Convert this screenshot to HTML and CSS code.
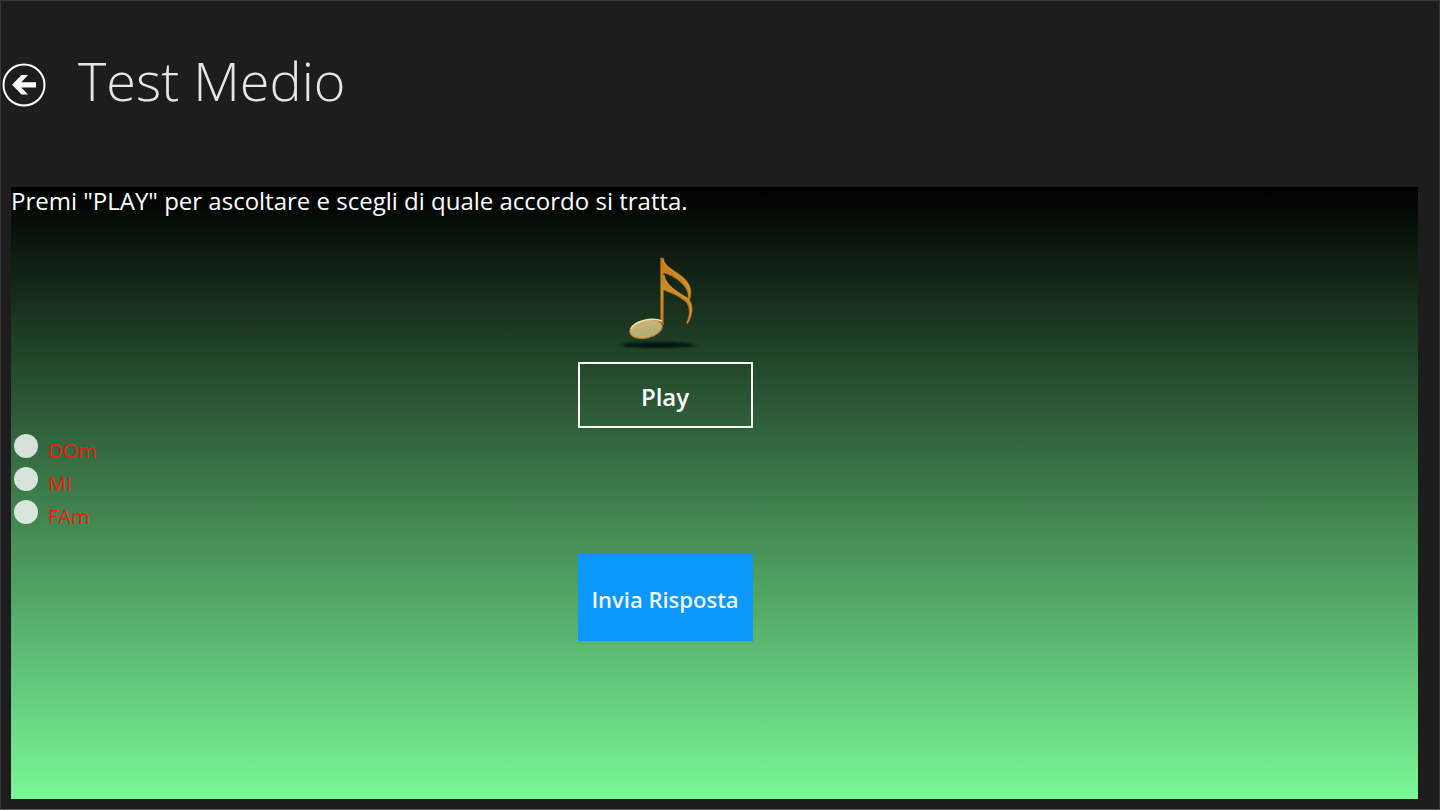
FILE: index.html
```html
<!DOCTYPE html>
<html lang="it">

<head>
    <meta charset="UTF-8">
    <meta name="viewport" content="width=device-width, initial-scale=1">
    <title>Test Medio</title>
    <link rel="stylesheet" href="styles.css">
</head>

<body>
    <header class="header">
        <button class="back" type="button" aria-label="Indietro">
            <svg viewBox="0 0 44 44" width="44" height="44">
                <circle cx="22" cy="22" r="20.5" fill="none" stroke="#fff" stroke-width="2" />
                <path d="M10 21.700 L19.500 12 H26 L19.300 19.200 H34 V24.400 H19.300 L26 31.500 H19.500 Z" fill="#fff" />
            </svg>
        </button>
        <h1 class="title">Test Medio</h1>
    </header>
    <main class="panel">
        <p class="question">Premi "PLAY" per ascoltare e scegli di quale accordo si tratta.</p>
        <div class="player">
            <svg class="note" viewBox="0 0 100 110" width="100" height="110" aria-hidden="true">
                <defs>
                    <linearGradient id="stem" x1="0" y1="0" x2="0" y2="1">
                        <stop offset="0" stop-color="#c8790f" />
                        <stop offset="0.5" stop-color="#c98f2c" />
                        <stop offset="1" stop-color="#c07a1e" />
                    </linearGradient>
                    <linearGradient id="head" x1="0" y1="0" x2="0" y2="1">
                        <stop offset="0" stop-color="#c9b578" />
                        <stop offset="1" stop-color="#b3ad70" />
                    </linearGradient>
                    <filter id="soft" x="-20%" y="-100%" width="140%" height="300%">
                        <feGaussianBlur stdDeviation="3 1" />
                    </filter>
                </defs>
                <ellipse cx="48" cy="100" rx="36" ry="3" fill="#06140a" filter="url(#soft)" />
                <path d="M50.500 13 H53.500 C54 26 81 28 81 48 Q81 52 79.500 55 C84 62 83 70 77.500 79 L76.500 78 C81 68 80 58 72 54 C65 49 58 47 53.500 45 V80 L50.500 77 Z M53.500 28 C54 39 68 47 78 53 C80 41 63 30 53.500 28 Z" fill="url(#stem)" fill-rule="evenodd" stroke="#9c5610" stroke-width="0.6" />
                <path d="M53 15 C56 28 79 30 80 47 M54 30 C56 42 70 49 78 54 C82 60 82 69 77 78" fill="none" stroke="#e0a050" stroke-width="0.8" />
                <ellipse cx="36" cy="84" rx="16.500" ry="9" transform="rotate(-13 36 84)" fill="url(#head)" stroke="#c27a24" stroke-width="1" />
                <path d="M21 84 C24 76 42 72 52 76" fill="none" stroke="#f4e2b8" stroke-width="1.500" />
            </svg>
            <button class="btn btn-play" type="button">Play</button>
        </div>
        <form class="answers" id="answers">
            <label class="answer"><input type="radio" name="accordo" value="DOm"><span>DOm</span></label>
            <label class="answer"><input type="radio" name="accordo" value="MI"><span>MI</span></label>
            <label class="answer"><input type="radio" name="accordo" value="FAm"><span>FAm</span></label>
        </form>
        <div class="submit">
            <button class="btn btn-send" type="submit" form="answers">Invia Risposta</button>
        </div>
    </main>
</body>

</html>
```

FILE: styles.css
```css
* {
    box-sizing: border-box;
    margin: 0;
    padding: 0;
}

body {
    min-height: 100vh;
    display: flex;
    flex-direction: column;
    background: #1d1d1d;
    border: 1px solid #383838;
    border-bottom-color: #5c5a5c;
    font-family: "Open Sans", "Noto Sans", sans-serif;
    color: #fff;
}

.header {
    display: flex;
    align-items: center;
    gap: 32px;
    height: 168px;
    padding-left: 1px;
}

.back {
    width: 44px;
    height: 44px;
    border: none;
    background: none;
    cursor: pointer;
}

.back svg {
    display: block;
}

.title {
    font-size: 54px;
    line-height: 64px;
    font-weight: 300;
    color: #e6e6e6;
    padding-bottom: 10px;
}

.panel {
    flex: 1;
    margin: 18px 21px 10px 10px;
    background: linear-gradient(#000, #7af797);
}

.question {
    font-size: 24px;
    line-height: 28px;
}

.player,
.submit {
    display: flex;
    flex-direction: column;
    align-items: center;
    padding-right: 99px;
}

.player {
    padding-top: 30px;
}

.note {
    margin-right: 10px;
}

.btn {
    width: 175px;
    padding-top: 2px;
    font-family: inherit;
    font-size: 24px;
    font-weight: 600;
    color: #fff;
    cursor: pointer;
}

.btn-play {
    height: 66px;
    margin-top: 7px;
    border: 2px solid #fff;
    background: none;
}

.answers {
    padding: 2px 3px;
}

.answer {
    display: flex;
    gap: 10px;
    width: 120px;
    height: 33px;
    padding-top: 4px;
    font-size: 20px;
    line-height: 33px;
    color: #f01a0c;
}

.answer input {
    appearance: none;
    width: 24px;
    height: 24px;
    border-radius: 50%;
    background: rgba(255, 255, 255, 0.8);
}

.answer input:checked {
    border: 7px solid #fff;
    background: #000;
}

.btn-send {
    height: 87px;
    margin-top: 23px;
    border: none;
    background: #0c97fb;
    font-size: 22px;
    color: #eef6ff;
}
```
